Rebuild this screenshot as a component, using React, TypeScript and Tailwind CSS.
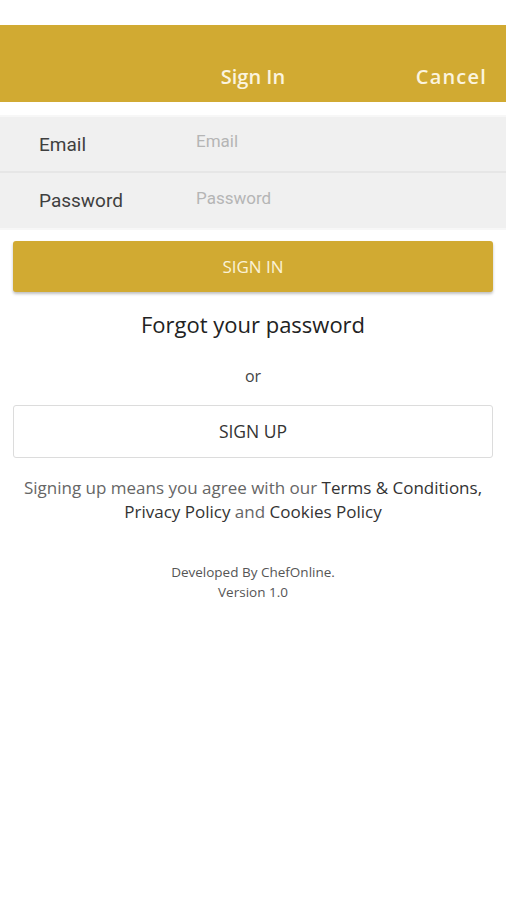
export default function App() {
  return (
    <div className="min-h-[900px] bg-white" style={{ fontFamily: '"Open Sans", "Noto Sans", sans-serif' }}>
      {/* status bar space */}
      <div className="h-[25px] bg-white" />

      {/* ヘッダー */}
      <div className="h-[77px] bg-[#d1aa32] grid grid-cols-3 items-end pb-[10px]">
        <div />
        <div className="text-center text-[20px] font-semibold text-[#fbf4df]">Sign In</div>
        <div className="text-right pr-[19px] text-[20px] font-semibold tracking-[0.06em] text-[#fbf4df]">Cancel</div>
      </div>

      {/* フォーム */}
      <div className="mt-[13px] bg-[#f0f0f0] border-t-2 border-b-2 border-[#f7f7f7]" style={{ fontFamily: 'Roboto, sans-serif' }}>
        <div className="h-[56px] flex items-center border-b-2 border-[#e6e6e6]">
          <div className="w-[196px] pl-[39px] pt-[2px] text-[19px] text-[#3f3f3f]">Email</div>
          <div className="text-[17px] text-[#b5b5b5] pb-[4px]">Email</div>
        </div>
        <div className="h-[55px] flex items-center">
          <div className="w-[196px] pl-[39px] pt-[2px] text-[19px] text-[#3f3f3f]">Password</div>
          <div className="text-[17px] text-[#b5b5b5] pb-[3px]">Password</div>
        </div>
      </div>

      <div className="px-[13px] pt-[11px]">
        <button className="w-full h-[51px] rounded-[3px] bg-[#d1aa32] shadow-[0_2px_3px_rgba(0,0,0,0.25)] text-[17px] text-[#fbf2d6]">
          SIGN IN
        </button>

        <div className="mt-[16px] text-center text-[22px] text-[#222]">Forgot your password</div>

        <div className="mt-[23px] text-center text-[16px] text-[#444]">or</div>

        <button className="mt-[17px] w-full h-[53px] rounded-[3px] border border-[#dcdcdc] bg-white text-[17.5px] text-[#333]">
          SIGN UP
        </button>

        <div className="mt-[18px] text-center text-[17px] leading-[24px] text-[#666]">
          Signing up means you agree with our <span className="text-[#333]">Terms &amp; Conditions,</span>
          <br />
          <span className="text-[#333]">Privacy Policy</span> and <span className="text-[#333]">Cookies Policy</span>
        </div>

        <div className="mt-[38px] text-center text-[13.5px] leading-[20px] text-[#555]">
          Developed By ChefOnline.
          <br />
          Version 1.0
        </div>
      </div>
    </div>
  )
}
